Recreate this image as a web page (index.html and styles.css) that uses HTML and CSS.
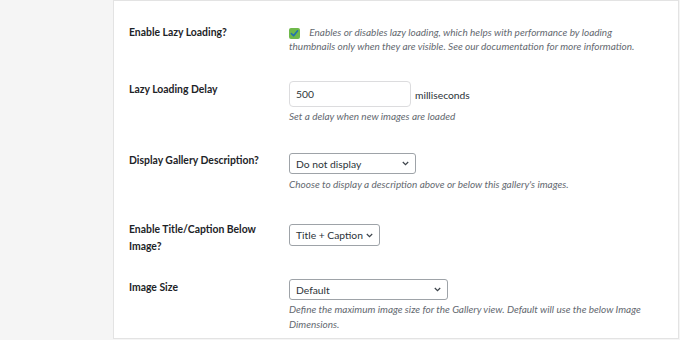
FILE: index.html
```html
<!DOCTYPE html>
<html lang="en">
<head>
    <meta charset="UTF-8">
    <title>Gallery Settings</title>
    <link rel="stylesheet" href="styles.css">
</head>
<body>
    <div class="page">
        <div class="sidebar"></div>

        <div class="panel">
            <div class="form-table">
                <div class="label">Enable Lazy Loading?</div>
                <div class="field">
                    <p class="desc desc-first">
                        <span class="check">
                            <svg width="9" height="9" viewBox="0 0 9 9"><path d="M1.4 4.6 L3.6 6.8 L7.6 1.8" fill="none" stroke="#2271b1" stroke-width="1.6" stroke-linecap="round" stroke-linejoin="round"/></svg>
                        </span>
                        Enables or disables lazy loading, which helps with performance by loading thumbnails only when they are visible. See our documentation for more information.
                    </p>
                </div>

                <div class="label">Lazy Loading Delay</div>
                <div class="field">
                    <div class="inline">
                        <div class="input">500</div>
                        <span class="unit">milliseconds</span>
                    </div>
                    <p class="desc">Set a delay when new images are loaded</p>
                </div>

                <div class="label">Display Gallery Description?</div>
                <div class="field">
                    <div class="select select-desc">
                        <span>Do not display</span>
                        <svg class="chevron" width="7" height="5" viewBox="0 0 7 5"><path d="M0.8 1 L3.5 3.7 L6.2 1" fill="none" stroke="#3c434a" stroke-width="1.2"/></svg>
                    </div>
                    <p class="desc">Choose to display a description above or below this gallery's images.</p>
                </div>

                <div class="label">Enable Title/Caption Below Image?</div>
                <div class="field">
                    <div class="select select-caption">
                        <span>Title + Caption</span>
                        <svg class="chevron" width="7" height="5" viewBox="0 0 7 5"><path d="M0.8 1 L3.5 3.7 L6.2 1" fill="none" stroke="#3c434a" stroke-width="1.2"/></svg>
                    </div>
                </div>

                <div class="label">Image Size</div>
                <div class="field">
                    <div class="select select-size">
                        <span>Default</span>
                        <svg class="chevron" width="7" height="5" viewBox="0 0 7 5"><path d="M0.8 1 L3.5 3.7 L6.2 1" fill="none" stroke="#3c434a" stroke-width="1.2"/></svg>
                    </div>
                    <p class="desc">Define the maximum image size for the Gallery view. Default will use the below Image Dimensions.</p>
                </div>
            </div>
        </div>
    </div>
</body>
</html>
```
FILE: styles.css
```css
body {
    margin: 0;
    background-color: #f5f5f5;
    font-family: Lato, sans-serif;
    color: #1d2327;
}

.page {
    display: flex;
    height: 340px;
}

.sidebar {
    width: 113px;
    flex-shrink: 0;
}

.panel {
    flex: 1;
    height: 337px;
    margin-right: 1px;
    background-color: #fff;
    border: 1px solid #e3e3e3;
    padding: 23px 0 0 15px;
    box-sizing: border-box;
    height: 339px;
}

.form-table {
    display: grid;
    grid-template-columns: 160px 362px;
    grid-template-rows: 57px 71px 69px 58px auto;
}

.label {
    font-size: 10.4px;
    font-weight: bold;
    line-height: 17px;
    width: 140px;
}

.field {
    padding-top: 1px;
}

.desc {
    margin: 0;
    font-size: 10px;
    font-style: italic;
    line-height: 14px;
    color: #646970;
}

.desc-first {
    line-height: 14px;
}

.check {
    display: inline-flex;
    align-items: center;
    justify-content: center;
    width: 11px;
    height: 11px;
    margin-right: 7px;
    vertical-align: -2px;
    background-color: #6fb94b;
    border-radius: 2px;
}

.inline {
    display: flex;
    align-items: center;
}

.input {
    width: 122px;
    height: 26px;
    box-sizing: border-box;
    margin-top: -1px;
    padding: 0 6px;
    border: 1px solid #dcdcde;
    border-radius: 4px;
    font-size: 10.3px;
    line-height: 24px;
    color: #2c3338;
}

.unit {
    margin-left: 4px;
    font-size: 10.3px;
    color: #2c3338;
}

.inline + .desc {
    margin-top: 2px;
}

.select {
    display: flex;
    align-items: center;
    justify-content: space-between;
    height: 21px;
    box-sizing: border-box;
    padding: 0 6px;
    border: 1px solid #9ea3a8;
    border-radius: 3px;
    font-size: 10.3px;
    color: #2c3338;
    background-color: #fff;
}

.select + .desc {
    margin-top: 3px;
}

.select-desc {
    width: 127px;
}

.select-caption {
    width: 91px;
    height: 22px;
    margin-top: 2px;
}

.select-size {
    width: 159px;
    margin-top: -1px;
}

.select-size + .desc {
    margin-top: 2px;
    line-height: 15px;
}
```
